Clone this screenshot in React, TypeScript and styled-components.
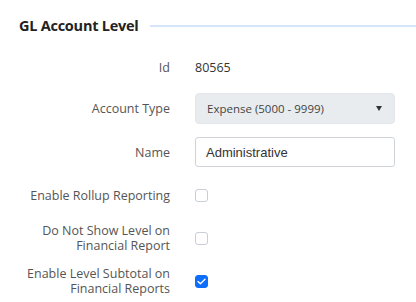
import React from "react";
import styled, { createGlobalStyle } from "styled-components";

const Global = createGlobalStyle`
  html, body { margin: 0; padding: 0; background: #ffffff; }
  body { font-family: "Open Sans", "Noto Sans", sans-serif; }
  * { box-sizing: border-box; }
`;

const Page = styled.div`
  width: 416px;
  height: 302px;
  padding: 16px 0 0 19px;
  background: #ffffff;
`;

const Header = styled.div`
  display: flex;
  align-items: center;
  gap: 12px;
  height: 20px;
`;

const Title = styled.h2`
  margin: 0;
  font-size: 14.5px;
  line-height: 20px;
  font-weight: 700;
  color: #222222;
  letter-spacing: -0.25px;
`;

const Rule = styled.div`
  flex: 1;
  height: 1.5px;
  background: #d6e5fa;
`;

const Form = styled.div`
  display: grid;
  grid-template-columns: 151px 200px;
  column-gap: 25px;
  grid-template-rows: 30px 31px 30px 30px 30px 30px;
  row-gap: 13px;
  margin-top: 14px;
`;

const Label = styled.div<{ $top?: number }>`
  display: flex;
  align-items: center;
  justify-content: flex-end;
  text-align: right;
  font-size: 12.5px;
  line-height: 15px;
  color: #555555;
  padding-top: ${(p) => p.$top ?? 0}px;
`;

const Value = styled.div<{ $top?: number }>`
  display: flex;
  align-items: center;
  font-size: 12.5px;
  color: #333333;
  padding-top: ${(p) => p.$top ?? 0}px;
`;

const Select = styled.div`
  display: flex;
  align-items: center;
  justify-content: space-between;
  height: 31px;
  padding: 0 12px 0 11px;
  background: #e9ecef;
  border: 1px solid #e3e6ea;
  border-radius: 4px;
  font-size: 11.5px;
  color: #444444;
`;

const Caret = styled.span`
  width: 0;
  height: 0;
  border-left: 3.5px solid transparent;
  border-right: 3.5px solid transparent;
  border-top: 5px solid #333333;
`;

const Input = styled.div`
  display: flex;
  align-items: center;
  height: 30px;
  padding: 0 10px;
  border: 1px solid #cfd3d7;
  border-radius: 3px;
  font-family: "Liberation Sans", Arial, sans-serif;
  font-size: 13px;
  color: #333333;
`;

const Check = styled.span<{ $on?: boolean }>`
  width: 13px;
  height: 13px;
  border-radius: 3px;
  border: 1px solid ${(p) => (p.$on ? "#0d6efd" : "#c9ced4")};
  background: ${(p) => (p.$on ? "#0d6efd" : "#ffffff")};
  display: flex;
  align-items: center;
  justify-content: center;
`;

export default function App() {
  return (
    <>
      <Global />
      <Page>
        <Header>
          <Title>GL Account Level</Title>
          <Rule />
        </Header>
        <Form>
          <Label $top={4}>Id</Label>
          <Value $top={4}>80565</Value>

          <Label>Account Type</Label>
          <Select>
            <span>Expense (5000 - 9999)</span>
            <Caret />
          </Select>

          <Label>Name</Label>
          <Input>Administrative</Input>

          <Label>Enable Rollup Reporting</Label>
          <Value>
            <Check />
          </Value>

          <Label>
            Do Not Show Level on
            <br />
            Financial Report
          </Label>
          <Value>
            <Check />
          </Value>

          <Label>
            Enable Level Subtotal on
            <br />
            Financial Reports
          </Label>
          <Value>
            <Check $on>
              <svg width="9" height="7" viewBox="0 0 9 7">
                <path d="M1 3.6 L3.4 5.8 L8 1.2" fill="none" stroke="#ffffff" strokeWidth="1.4" strokeLinecap="round" strokeLinejoin="round" />
              </svg>
            </Check>
          </Value>
        </Form>
      </Page>
    </>
  );
}
